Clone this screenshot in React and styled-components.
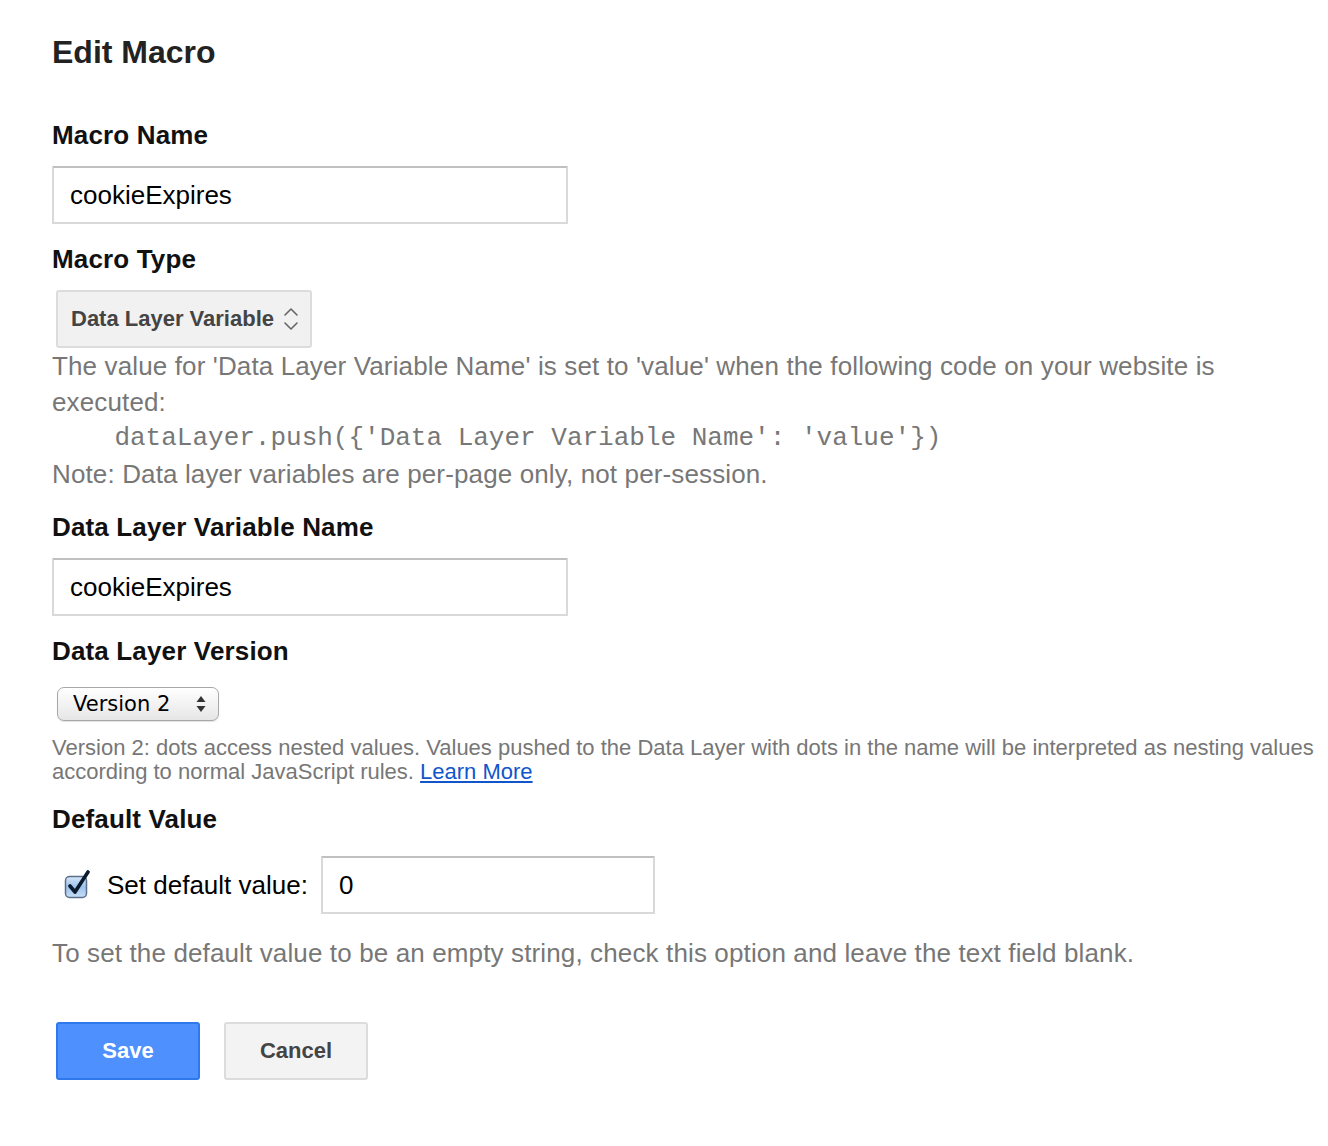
import styled, { createGlobalStyle } from 'styled-components';

const GlobalStyle = createGlobalStyle`
  html, body {
    margin: 0;
    padding: 0;
    background: #ffffff;
  }
  body {
    font-family: "Liberation Sans", Arial, sans-serif;
  }
`;

// --- Layout ---
const Page = styled.div`
  padding: 32px 0 60px 52px;
  display: flex;
  flex-direction: column;
  align-items: flex-start;
`;

const Title = styled.h1`
  margin: 0;
  font-size: 32px;
  line-height: 40px;
  font-weight: 700;
  color: #222;
`;

const Label = styled.h3`
  margin: ${props => props.$top || 19}px 0 0;
  font-size: 26px;
  line-height: 32px;
  font-weight: 700;
  letter-spacing: 0.15px;
  color: #111;
`;

const TextInput = styled.input`
  box-sizing: border-box;
  display: block;
  width: ${props => props.$width || 516}px;
  height: 58px;
  margin: ${props => (props.$flush ? '0' : '15px 0 0')};
  padding: 0 16px;
  border: 2px solid #d9d9d9;
  border-top-color: #c0c0c0;
  border-radius: 1px;
  font-family: "Liberation Sans", Arial, sans-serif;
  font-size: 26px;
  color: #000;
  background: #fff;
  outline: none;
`;

// --- Google-style select (Macro Type) ---
const TypeSelect = styled.div`
  box-sizing: border-box;
  margin: 15px 0 0 4px;
  width: 256px;
  height: 58px;
  display: flex;
  align-items: center;
  justify-content: space-between;
  padding: 0 10px 0 13px;
  background: #f1f1f1;
  border: 2px solid #dcdcdc;
  border-radius: 3px;
  font-size: 22px;
  font-weight: 700;
  color: #444;
`;

const HelpText = styled.div`
  font-size: 26px;
  line-height: 36px;
  letter-spacing: 0.13px;
  color: #777;
  width: 1220px;
`;

const Code = styled.pre`
  margin: 0;
  font-family: "Liberation Mono", "Courier New", monospace;
  font-size: 26px;
  line-height: 36px;
  letter-spacing: 0;
  color: #777;
`;

// --- Native mac-like select (Data Layer Version) ---
const NativeSelect = styled.div`
  box-sizing: border-box;
  margin: 20px 0 0 5px;
  width: 162px;
  height: 34px;
  display: flex;
  align-items: center;
  justify-content: space-between;
  padding: 0 12px 0 15px;
  background: linear-gradient(#ffffff, #f0f0f0 60%, #e6e6e6);
  border: 1.5px solid #a8a8a8;
  border-radius: 7px;
  box-shadow: 0 1px 1px rgba(0, 0, 0, 0.12);
  font-family: "DejaVu Sans", "Liberation Sans", sans-serif;
  font-size: 21px;
  color: #000;
`;

const SmallHelp = styled.div`
  margin-top: 15px;
  font-size: 22px;
  line-height: 24px;
  color: #777;
  width: 1276px;
`;

const Link = styled.a`
  color: #15c;
  text-decoration: underline;
`;

const DefaultRow = styled.div`
  margin-top: 21px;
  display: flex;
  align-items: center;
`;

const CheckLabel = styled.label`
  display: flex;
  align-items: center;
  margin-left: 12px;
  gap: 15px;
  font-size: 26px;
  color: #000;
  margin-right: 13px;
`;

const Hint = styled(HelpText)`
  margin-top: 21px;
`;

const Buttons = styled.div`
  margin: 51px 0 0 4px;
  display: flex;
  gap: 24px;
`;

const Button = styled.button`
  box-sizing: border-box;
  width: 144px;
  height: 58px;
  border-radius: 3px;
  font-family: "Liberation Sans", Arial, sans-serif;
  font-size: 22px;
  font-weight: 700;
  cursor: pointer;
  background: ${props => (props.$primary ? '#4d90fe' : '#f3f3f3')};
  border: 2px solid ${props => (props.$primary ? '#3079ed' : '#dcdcdc')};
  color: ${props => (props.$primary ? '#ffffff' : '#444')};
`;

const Chevrons = () => (
  <svg width="18" height="28" viewBox="0 0 18 28" fill="none" stroke="#666" strokeWidth="1.6" strokeLinecap="round" strokeLinejoin="round">
    <polyline points="3 10 9 4 15 10" />
    <polyline points="3 18 9 24 15 18" />
  </svg>
);

const Triangles = () => (
  <svg width="10" height="18" viewBox="0 0 10 18" fill="#333">
    <polygon points="5 1 9.5 7 0.5 7" />
    <polygon points="5 17 9.5 11 0.5 11" />
  </svg>
);

const MacCheckbox = () => (
  <svg width="28" height="30" viewBox="0 0 28 30">
    <defs>
      <linearGradient id="cbFill" x1="0" y1="0" x2="0" y2="1">
        <stop offset="0" stopColor="#d6e6f8" />
        <stop offset="0.5" stopColor="#9cc3ee" />
        <stop offset="1" stopColor="#c7def6" />
      </linearGradient>
    </defs>
    <rect x="1.5" y="6.5" width="21" height="21" rx="4" fill="url(#cbFill)" stroke="#5b6f8a" strokeWidth="1.5" />
    <path d="M6 16 L11 22 L24 2" fill="none" stroke="#0c1a2e" strokeWidth="3.6" strokeLinecap="round" strokeLinejoin="round" />
  </svg>
);

export default function App() {
  return (
    <>
      <GlobalStyle />
      <Page>
        <Title>Edit Macro</Title>

        <Label $top={47}>Macro Name</Label>
        <TextInput defaultValue="cookieExpires" />

        <Label>Macro Type</Label>
        <TypeSelect>
          <span>Data Layer Variable</span>
          <Chevrons />
        </TypeSelect>
        <HelpText>
          The value for 'Data Layer Variable Name' is set to 'value' when the following code on your website is executed:
          <Code>{"    dataLayer.push({'Data Layer Variable Name': 'value'})"}</Code>
          Note: Data layer variables are per-page only, not per-session.
        </HelpText>

        <Label>Data Layer Variable Name</Label>
        <TextInput defaultValue="cookieExpires" />

        <Label>Data Layer Version</Label>
        <NativeSelect>
          <span>Version 2</span>
          <Triangles />
        </NativeSelect>
        <SmallHelp>
          Version 2: dots access nested values. Values pushed to the Data Layer with dots in the name will be interpreted as nesting values according to normal JavaScript rules. <Link href="#">Learn More</Link>
        </SmallHelp>

        <Label>Default Value</Label>
        <DefaultRow>
          <CheckLabel>
            <MacCheckbox />
            <span>Set default value:</span>
          </CheckLabel>
          <TextInput $flush $width={334} defaultValue="0" />
        </DefaultRow>
        <Hint>To set the default value to be an empty string, check this option and leave the text field blank.</Hint>

        <Buttons>
          <Button $primary>Save</Button>
          <Button>Cancel</Button>
        </Buttons>
      </Page>
    </>
  );
}
